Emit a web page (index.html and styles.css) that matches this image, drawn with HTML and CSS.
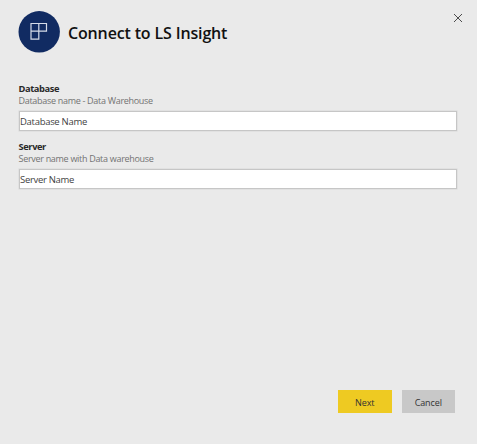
FILE: index.html
```html
<!DOCTYPE html>
<html lang="en">
<head>
<meta charset="utf-8">
<title>Connect to LS Insight</title>
<link rel="stylesheet" href="styles.css">
</head>
<body>
<main class="dialog">
  <header class="header">
    <svg class="logo" viewBox="0 0 42 42" aria-hidden="true">
      <circle cx="21.2" cy="20.8" r="20.7" fill="#112b62"/>
      <path d="M13 12.5h15.5v7.7h-7.7v8H13zM20.8 12.5v7.7H13" fill="none" stroke="#d5dbe8" stroke-width="1.2"/>
    </svg>
    <h1 class="title">Connect to LS Insight</h1>
    <button class="close" aria-label="Close">
      <svg viewBox="0 0 10 10"><path d="M1 1l8 8M9 1L1 9" stroke="#4c4c4c" stroke-width="1"/></svg>
    </button>
  </header>
  <form class="form">
    <div class="field">
      <label class="label" for="database">Database</label>
      <p class="hint">Database name - Data Warehouse</p>
      <input class="input" id="database" value="Database Name">
    </div>
    <div class="field">
      <label class="label" for="server">Server</label>
      <p class="hint">Server name with Data warehouse</p>
      <input class="input" id="server" value="Server Name">
    </div>
  </form>
  <footer class="actions">
    <button class="button primary">Next</button>
    <button class="button">Cancel</button>
  </footer>
</main>
</body>
</html>
```
FILE: styles.css
```css
* { box-sizing: border-box; }
body {
  margin: 0;
  background: #eaeaea;
  font-family: "Open Sans", "Noto Sans", sans-serif;
}
.dialog {
  height: 444px;
  padding: 11px 20px 31px 18px;
  display: flex;
  flex-direction: column;
}
.header { display: flex; height: 42px; }
.logo { width: 42px; height: 42px; }
.title {
  margin: 0 0 0 8px;
  font-size: 16px;
  line-height: 44px;
  font-weight: 600;
  letter-spacing: -0.15px;
  color: #111;
  white-space: nowrap;
}
.close {
  margin: 2px -6px 0 auto;
  width: 10px;
  height: 10px;
  padding: 0;
  border: 0;
  background: none;
}
.close svg { display: block; width: 10px; height: 10px; }
.form { margin-top: 29px; }
.field { height: 58px; }
.label {
  display: block;
  padding-left: 0.5px;
  font-size: 9.3px;
  line-height: 13px;
  font-weight: 700;
  letter-spacing: -0.4px;
  color: #292929;
}
.hint {
  margin: 0;
  padding-left: 0.5px;
  font-size: 9px;
  line-height: 12px;
  letter-spacing: -0.3px;
  color: #737373;
}
.input {
  display: block;
  width: 438px;
  height: 20px;
  margin: 4px 0 0 1px;
  padding: 1px 0 0;
  border: 1px solid #c6c6c6;
  border-radius: 0;
  box-shadow: 0 0 0 0.5px #d8d8d8;
  background: #fff;
  font: 9.5px "Open Sans", "Noto Sans", sans-serif;
  letter-spacing: -0.3px;
  color: #3f3f3f;
  outline: 0;
}
.actions {
  margin-top: auto;
  padding-right: 2px;
  display: flex;
  justify-content: flex-end;
  gap: 10px;
}
.button {
  width: 53.5px;
  height: 23px;
  padding: 1px 0 0;
  border: 0;
  background: #c8c8c8;
  font: 9px "Open Sans", "Noto Sans", sans-serif;
  letter-spacing: -0.1px;
  color: #333;
}
.primary { background: #eeca22; }
```
